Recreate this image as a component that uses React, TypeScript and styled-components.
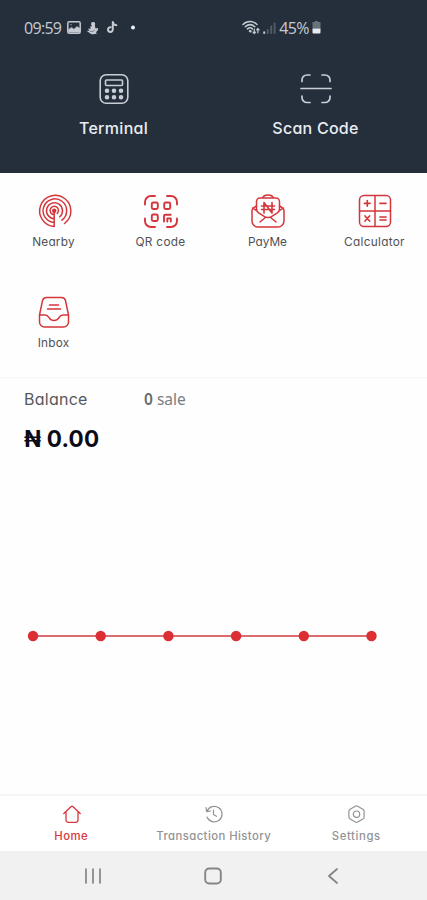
import React from "react";
import styled, { createGlobalStyle } from "styled-components";

const GlobalStyle = createGlobalStyle`
  * { box-sizing: border-box; }
  body { margin: 0; background: #fefefe; }
`;

const Screen = styled.div`
  width: 427px;
  height: 900px;
  display: flex;
  flex-direction: column;
  overflow: hidden;
  background: #fefefe;
  font-family: Inter, "Open Sans", sans-serif;
  font-feature-settings: "cv11";
`;

const Header = styled.header`
  height: 173px;
  flex: none;
  background: #252f3c;
  color: #e9edf1;
`;

const StatusBar = styled.div`
  height: 55px;
  padding: 0 106px 0 24px;
  display: flex;
  justify-content: space-between;
  align-items: center;
  color: #c5cbd1;
  font: 400 16px/20px "Open Sans", sans-serif;
`;

const StatusGroup = styled.div<{ $gap: number }>`
  display: flex;
  align-items: center;
  gap: ${(p) => p.$gap}px;
`;

const StatusText = styled.span<{ $spacing: number }>`
  letter-spacing: ${(p) => p.$spacing}px;
`;

const Glyph = styled.svg`
  display: block;
  flex: none;
  overflow: visible;
  fill: none;
  stroke: currentColor;
  stroke-linecap: round;
  stroke-linejoin: round;
`;

const Label = styled.span<{ $size: number; $spacing?: number; $weight?: number }>`
  font-size: ${(p) => p.$size}px;
  font-weight: ${(p) => p.$weight ?? 400};
  letter-spacing: ${(p) => p.$spacing ?? 0}px;
  line-height: 20px;
  white-space: nowrap;
`;

const HeroActions = styled.div`
  display: grid;
  grid-template-columns: 227px 177px;
  padding-top: 18px;
`;

const HeroAction = styled.button`
  all: unset;
  display: flex;
  flex-direction: column;
  align-items: center;
  gap: 13px;
  color: #e9edf1;

  svg { color: #c9ced4; }
`;

const Shortcuts = styled.section`
  height: 204px;
  flex: none;
  padding-top: 20px;
  display: grid;
  grid-template-columns: repeat(4, 107px);
  grid-auto-rows: 101px;
`;

const Shortcut = styled.button`
  all: unset;
  display: flex;
  flex-direction: column;
  align-items: center;
  gap: 3px;
  color: #4e5155;

  svg { color: #d4363c; }
`;

const Balance = styled.section`
  border-top: 2px solid #f8f8f8;
  height: 417px;
  flex: none;
  padding: 10px 24px 0;
`;

const BalanceRow = styled.div`
  display: grid;
  grid-template-columns: 120px 1fr;
  height: 20px;
  color: #55585c;
`;

const Sales = styled.span`
  font: 400 15.5px/20px "Noto Sans", sans-serif;
  color: #7b7e81;
  b { font-weight: 600; color: #696c6f; }
`;

const Amount = styled.div`
  margin-top: 16px;
  font-size: 22.5px;
  line-height: 28px;
  font-weight: 700;
  color: #0b0c17;
  letter-spacing: 0.2px;
`;

const Chart = styled(Glyph)`
  margin: 177px 0 0 3px;
`;

const Tabs = styled.nav`
  height: 57px;
  flex: none;
  border-top: 2px solid #f5f5f5;
  padding-top: 8px;
  display: grid;
  grid-template-columns: repeat(3, 142.5px);
  background: #fff;
`;

const Tab = styled.button<{ $active?: boolean }>`
  all: unset;
  display: flex;
  flex-direction: column;
  align-items: center;
  gap: 1.5px;
  color: ${(p) => (p.$active ? "#d9363d" : "#919396")};
`;

const SystemBar = styled.div`
  height: 49px;
  flex: none;
  padding-left: 33px;
  display: grid;
  grid-template-columns: repeat(3, 120px);
  place-items: center;
  background: #f1f1f1;
  color: #858585;
`;

const ImageIcon = () => (
  <Glyph width="14" height="13" viewBox="0 0 14 13" strokeWidth="1.5">
    <rect x=".8" y=".8" width="12.4" height="11.4" rx="1.5" />
    <path d="M1.5 11V8.5l3-2 2.5 1.7 3-2.7 3 2V11z" fill="currentColor" strokeWidth=".5" />
    <circle cx="4" cy="3.7" r=".6" fill="currentColor" stroke="none" />
  </Glyph>
);

const BirdIcon = () => (
  <Glyph width="13" height="14" viewBox="1 0 13 14">
    <path stroke="none" fill="currentColor" d="M6.5 1C8.6.6 9.6 2 9 3.8 8.8 5 9.3 6 9.5 7.500L12 7c.3 2-.8 3.500-2.200 4.200l1.200 1C8.500 14 4.500 13.600 3 11.500L.8 10l3-.6-2-1.600 3.200-.3-1-2 2-.2-1-1.800C5.200 2.300 5.300 1.300 6.500 1z" />
    <path d="M4.500 10.500c1.700.4 3-.2 4-1.300" stroke="#252f3c" strokeWidth=".5" />
  </Glyph>
);

const NoteIcon = () => (
  <Glyph width="11" height="13" viewBox="-1 0 11 13" strokeWidth="2">
    <path d="M5.8 1v7.6a2.4 2.4 0 1 1-2.2-2.4M6 1.3c.3 1.7 1.5 2.7 3.3 2.9" />
  </Glyph>
);

const WifiIcon = () => (
  <Glyph width="18" height="15" viewBox="-1 -0.5 18 15" strokeWidth="1.5">
    <path d="M0 4c4-4 10-4 14 0M2.3 6.200c3-2.600 6.500-2.600 9.500 0M4.500 8.400c1.700-1.500 3.500-1.500 5 0" />
    <path d="M7 10.500l.5.300" strokeWidth="2.4" />
    <path d="M11.3 8.500V13m-1.300-1.300L11.300 13l1.200-1.300M14.900 12.300V8m-1.200 1.300L14.900 8l1.200 1.300" strokeWidth="1.2" />
  </Glyph>
);

const SignalIcon = () => (
  <Glyph width="13" height="12" viewBox="0 0 13 12" strokeWidth="2">
    <path d="M1.2 11v-.8" />
    <path d="M4.7 11V8M8.200 11V4.500M11.600 11V1.500" opacity=".28" />
  </Glyph>
);

const BatteryIcon = () => (
  <Glyph width="9" height="13" viewBox="0 0 9 13" stroke="none">
    <path d="M3 0h3v1h2.500v6.500h-8V1H3z" fill="#69727b" stroke="none" />
    <path d="M.5 7.500h8v4a1 1 0 0 1-1 1h-6a1 1 0 0 1-1-1z" fill="#e8ecef" stroke="none" />
  </Glyph>
);

const TerminalIcon = () => (
  <Glyph width="32" height="32" viewBox="0 0 32 32" strokeWidth="1.6">
    <rect x="2.2" y="1.7" width="27.6" height="28.5" rx="6" />
    <rect x="7.5" y="7" width="17" height="5.5" rx="1" />
    {[17.7, 24.2].map((y) =>
      [9, 16, 23].map((x) => <circle key={`${x}-${y}`} cx={x} cy={y} r="1.5" fill="#c9ced4" />)
    )}
  </Glyph>
);

const ScanIcon = () => (
  <Glyph width="32" height="32" viewBox="0 0 32 32" strokeWidth="1.7">
    <path d="M2 8.500V7a5 5 0 0 1 5-5h3M22 2h3a5 5 0 0 1 5 5v1.500M2 23v1.500a5 5 0 0 0 5 5h3M22 29.500h3a5 5 0 0 0 5-5V23" />
    <path d="M1 15.500h30" />
  </Glyph>
);

const NearbyIcon = () => (
  <Glyph width="36" height="36" viewBox="-0.2 0 36 36" strokeWidth="1.5">
    <path d="M18 33.500A15.600 15.600 0 1 1 28.300 30.500M18 29.500A11.800 11.800 0 1 1 25.700 27.200M18 25.700A8 8 0 1 1 23.500 23.800M18 21.700A4.200 4.200 0 1 1 21 20.500M18 18v15.500" />
    <circle cx="18" cy="17.7" r="1.5" fill="currentColor" />
  </Glyph>
);

const QrIcon = () => (
  <Glyph width="36" height="36" viewBox="0 0 36 36" strokeWidth="1.9" strokeLinecap="butt">
    <path d="M2 11.500V9a6 6 0 0 1 6-6h4M24 3h4a6 6 0 0 1 6 6v2.500M2 25.500V28a6 6 0 0 0 6 6h4M24 34h4a6 6 0 0 0 6-6v-2.500" />
    <rect x="8.8" y="9.5" width="6" height="6.5" rx="1.5" />
    <rect x="21.2" y="9.5" width="6" height="6.5" rx="1.5" />
    <rect x="8.8" y="21.5" width="6" height="6.5" rx="1.5" />
    <path d="M27.700 21.800h-5.500a1.200 1.200 0 0 0-1.200 1.200v5.600M24.300 28.600v-3.200h3.500v3.200" />
  </Glyph>
);

const PayIcon = () => (
  <Glyph width="36" height="36" viewBox="0 0 36 36" strokeWidth="1.5">
    <path d="M6.500 13l-2.500 1.500c-1.200.8-2 1.500-2 3V28a6 6 0 0 0 6 6h20a6 6 0 0 0 6-6V17.500c0-1.500-.8-2.200-2-3L29.500 13" />
    <path d="M6.500 16V8.500A3.500 3.500 0 0 1 10 5h16a3.500 3.500 0 0 1 3.500 3.500V16c0 2-1 3.200-2.500 4.200l-6 3.600c-2 1-4 1-6 0l-6-3.600c-1.500-1-2.500-2.200-2.500-4.200zM12.500 5C14 1 22 1 23.500 5M2.500 15l4.500 3M33.500 15L29 18M10 29l6-5M26 29l-6-5" />
    <path d="M14 20V9.500l8 10.500V9.500M11.500 13h13M11.500 16.500h13" strokeWidth="1.6" />
  </Glyph>
);

const CalculatorIcon = () => (
  <Glyph width="36" height="36" viewBox="0 0.5 36 36" strokeWidth="1.5">
    <rect x="2.5" y="3" width="31" height="31" rx="4.5" />
    <path d="M18 3v31M2.500 18.500h31" />
    <path d="M10.300 8v5.600M7.500 10.800h5.600M23 10.800h6M8 23.500l4.600 5M12.600 23.500l-4.600 5M23 24.500h6M23 27.500h6" strokeWidth="1.7" />
  </Glyph>
);

const InboxIcon = () => (
  <Glyph width="34" height="36" viewBox="0 0 34 36" strokeWidth="1.5">
    <path d="M9.500 3.500h15a4 4 0 0 1 4 3.200L31.500 21v7a5 5 0 0 1-5 5h-19a5 5 0 0 1-5-5v-7L5.500 6.700a4 4 0 0 1 4-3.200zM2.500 21H8c5 0 3 5.500 9 5.500S21 21 26 21h5.500" />
    <path d="M12.500 11h9M10.500 15h13" />
  </Glyph>
);

const HomeIcon = () => (
  <Glyph width="20" height="20" viewBox="-1 0 20 20" strokeWidth="1.3">
    <path d="M1.800 9.500L8.900 2.700a1.500 1.500 0 0 1 2.200 0l7.100 6.800M4 8V16a2.300 2.300 0 0 0 2.300 2.300h7.400A2.300 2.300 0 0 0 16 16V8" />
  </Glyph>
);

const HistoryIcon = () => (
  <Glyph width="20" height="20" viewBox="0 0 20 20" strokeWidth="1.2">
    <path d="M2 3.500l.6 4.200 4-.7M2.900 7.500A7.800 7.800 0 1 1 3 13M9.500 6.200v4.300l3 1.800" />
  </Glyph>
);

const SettingsIcon = () => (
  <Glyph width="20" height="20" viewBox="-0.5 0 20 20" strokeWidth="1.2">
    <path d="M8.800 2.300a2.400 2.400 0 0 1 2.400 0l5.200 3a2.400 2.400 0 0 1 1.200 2v5.800a2.400 2.400 0 0 1-1.200 2l-5.200 3a2.400 2.400 0 0 1-2.400 0l-5.200-3a2.400 2.400 0 0 1-1.200-2V7.300a2.400 2.400 0 0 1 1.200-2z" />
    <circle cx="10" cy="10.2" r="3.2" />
  </Glyph>
);

const shortcuts = [
  { name: "Nearby", Icon: NearbyIcon, spacing: 0.25 },
  { name: "QR code", Icon: QrIcon, spacing: 0.3 },
  { name: "PayMe", Icon: PayIcon, spacing: 0 },
  { name: "Calculator", Icon: CalculatorIcon, spacing: 0.3 },
  { name: "Inbox", Icon: InboxIcon, spacing: 0.2 },
];

const tabs = [
  { name: "Home", Icon: HomeIcon, active: true, spacing: 0.5 },
  { name: "Transaction History", Icon: HistoryIcon, active: false, spacing: 0.45 },
  { name: "Settings", Icon: SettingsIcon, active: false, spacing: 0.6 },
];

const points = [6, 73.7, 141.4, 209.1, 276.8, 344.5];

export default function App() {
  return (
    <Screen>
      <GlobalStyle />
      <Header>
        <StatusBar>
          <StatusGroup $gap={6}>
            <StatusText $spacing={-0.7}>09:59</StatusText>
            <ImageIcon />
            <BirdIcon />
            <NoteIcon />
            <Glyph width="18" height="6" viewBox="0 0 18 6">
              <circle cx="10" cy="2.5" r="2" fill="#eef1f4" stroke="none" />
            </Glyph>
          </StatusGroup>
          <StatusGroup $gap={3}>
            <WifiIcon />
            <SignalIcon />
            <StatusText $spacing={-0.6}>45%</StatusText>
            <BatteryIcon />
          </StatusGroup>
        </StatusBar>
        <HeroActions>
          <HeroAction>
            <TerminalIcon />
            <Label $size={16} $spacing={0.3} $weight={500}>Terminal</Label>
          </HeroAction>
          <HeroAction>
            <ScanIcon />
            <Label $size={16} $spacing={0.25} $weight={500}>Scan Code</Label>
          </HeroAction>
        </HeroActions>
      </Header>
      <Shortcuts>
        {shortcuts.map(({ name, Icon, spacing }) => (
          <Shortcut key={name}>
            <Icon />
            <Label $size={11.8} $spacing={spacing}>{name}</Label>
          </Shortcut>
        ))}
      </Shortcuts>
      <Balance>
        <BalanceRow>
          <Label $size={16} $spacing={0.25}>Balance</Label>
          <Sales><b>0</b> sale</Sales>
        </BalanceRow>
        <Amount>₦ 0.00</Amount>
        <Chart width="352" height="12" viewBox="0 0 352 12">
          <path d="M6 6H344.500" stroke="#dc6c70" strokeWidth="2.2" />
          {points.map((x) => <circle key={x} cx={x} cy="6" r="5.2" fill="#db2f34" stroke="none" />)}
        </Chart>
      </Balance>
      <Tabs>
        {tabs.map(({ name, Icon, active, spacing }) => (
          <Tab key={name} $active={active}>
            <Icon />
            <Label $size={11.3} $weight={500} $spacing={spacing}>{name}</Label>
          </Tab>
        ))}
      </Tabs>
      <SystemBar>
        <Glyph width="18" height="18" viewBox="0 0 18 18" strokeWidth="1.7">
          <path d="M2 2v14M9 2v14M16 2v14" />
        </Glyph>
        <Glyph width="18" height="18" viewBox="0 0 18 18" strokeWidth="1.9">
          <rect x="1.2" y="1.5" width="15.6" height="15" rx="4" />
        </Glyph>
        <Glyph width="18" height="18" viewBox="0 0 18 18" strokeWidth="1.8">
          <path d="M13 2L5 9l8 7" />
        </Glyph>
      </SystemBar>
    </Screen>
  );
}
